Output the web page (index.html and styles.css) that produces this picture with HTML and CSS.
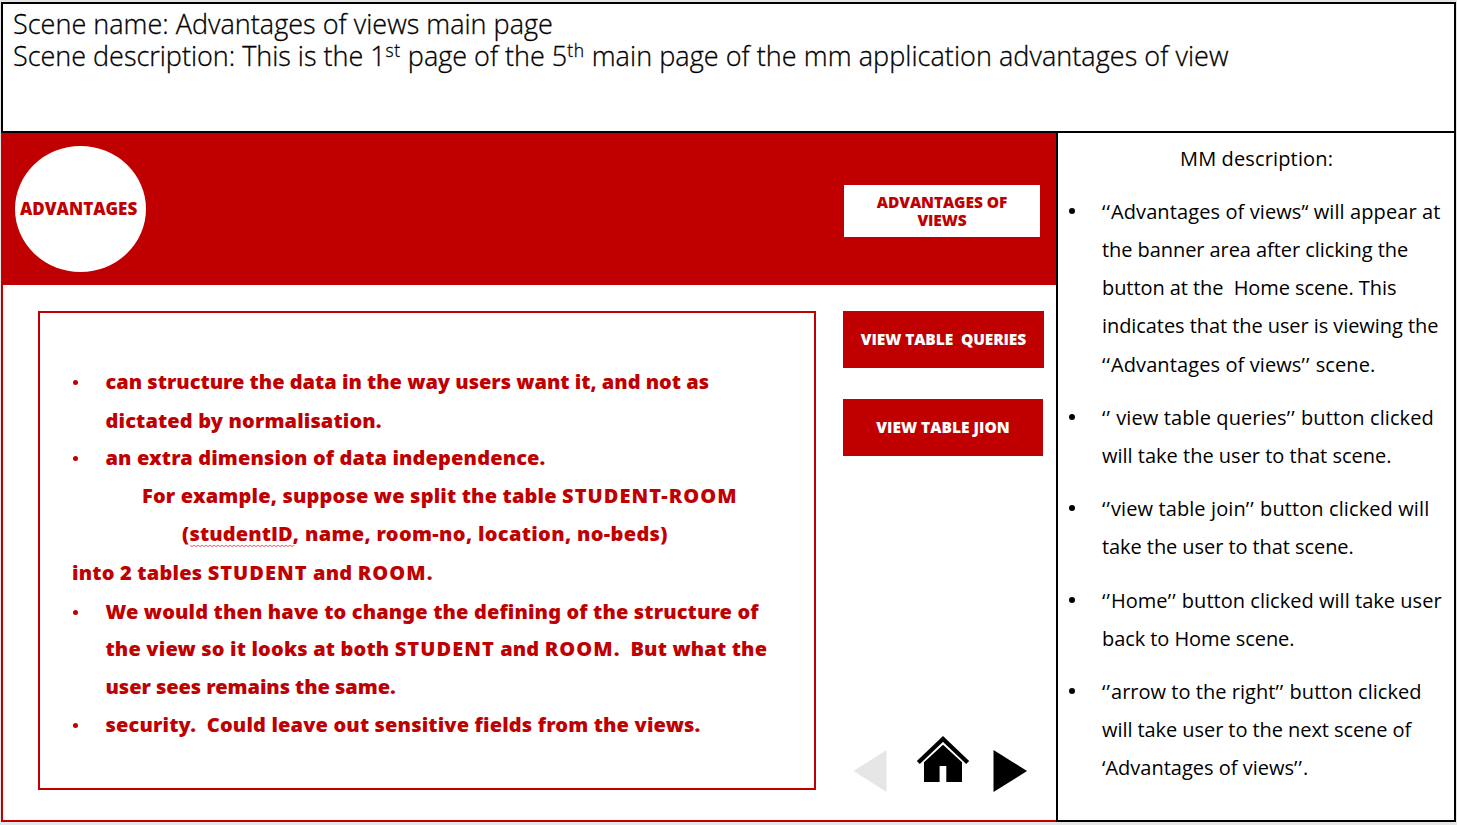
FILE: index.html
```
<!DOCTYPE html>
<html lang="en">
<head>
<meta charset="utf-8">
<title>Advantages of views</title>
<link rel="stylesheet" href="styles.css">
</head>
<body>
<div class="storyboard">
  <header class="scene">
    <p class="scene-name">Scene name: Advantages of views main page</p>
    <p><span class="sd-a">Scene description: This is the 1</span><span class="sup">st</span> page of the 5<span class="sup">th</span><span class="sd-b"> main page of the mm application advantages of view</span></p>
  </header>
  <div class="columns">
    <main class="stage">
      <div class="banner">
        <div class="circle">ADVANTAGES</div>
        <div class="banner-label">ADVANTAGES OF<br>VIEWS</div>
      </div>
      <div class="content">
        <section class="panel">
          <div class="line dot"><span class="l1">can structure the data in the way users want it, and not as</span></div>
          <div class="line ind"><span class="l2">dictated by normalisation.</span></div>
          <div class="line dot"><span class="l2">an extra dimension of data independence.</span></div>
          <div class="line ind-2"><span class="l4">For example, suppose we split the table <span class="caps">STUDENT-ROOM</span></span></div>
          <div class="line ind-3"><span class="l5">(<span class="typo">studentID<svg class="squiggle" width="104" height="4"><defs><pattern id="wave" width="4" height="4" patternUnits="userSpaceOnUse"><path d="M0 .8L2 2.8L4 .8" fill="none" stroke="#f03030" stroke-width=".9"/></pattern></defs><rect width="104" height="4" fill="url(#wave)"/></svg></span>, name, room-no, location, no-beds)</span></div>
          <div class="line"><span class="l6">into 2 tables <span class="caps">STUDENT</span> and <span class="caps">ROOM</span>.</span></div>
          <div class="line dot"><span class="l2">We would then have to change the defining of the structure of</span></div>
          <div class="line ind"><span class="l8">the view so it looks at both <span class="caps">STUDENT</span> and <span class="caps">ROOM</span>.  But what the</span></div>
          <div class="line ind"><span class="l9">user sees remains the same.</span></div>
          <div class="line dot"><span class="l10">security.  Could leave out sensitive fields from the views.</span></div>
        </section>
        <aside class="side">
          <div class="btn">VIEW TABLE  QUERIES</div>
          <div class="btn btn-join">VIEW TABLE JION</div>
          <nav class="nav">
            <svg width="34" height="42"><path d="M.5 21L33.5 0V42Z" fill="#e6e6e6"/></svg>
            <svg class="home" width="54" height="48" viewBox="916 735 54 48"><path d="M918.3 762.5L943 739L967.7 762.5" fill="none" stroke="#000" stroke-width="4.2"/><path d="M924 762.3L943 744.8L962 762.3V782H946.3V766H939.6V782H924Z"/></svg>
            <svg width="34" height="42"><path d="M.5 0L34 21L.5 42Z"/></svg>
          </nav>
        </aside>
      </div>
    </main>
    <section class="notes">
      <h1>MM description:</h1>
      <ul>
        <li class="tall"><span class="wide"><span class="q">‘‘</span>Advantages of views’‘ will appear at</span><br><span class="snug">the banner area after clicking the</span><br><span class="snug">button at the  Home scene. This</span><br><span class="snug">indicates that the user is viewing the</span><br><span class="drop wide"><span class="q">‘‘</span>Advantages of views<span class="q">’’</span> scene.</span></li>
        <li><span class="wide"><span class="q">‘’</span> view table queries<span class="q">’’</span> button clicked</span><br>will take the user to that scene.</li>
        <li><span class="wide"><span class="q">‘’</span>view table join<span class="q">’’</span> button clicked will</span><br><span class="snug">take the user to that scene.</span></li>
        <li class="late"><span class="mid"><span class="q">‘’</span>Home<span class="q">’’</span> button clicked will take user</span><br><span class="snug">back to Home scene.</span></li>
        <li><span class="mid"><span class="q">‘’</span>arrow to the right<span class="q">’’</span> button clicked</span><br><span class="snug">will take user to the next scene of</span><br>‘Advantages of views<span class="q">’’</span>.</li>
      </ul>
    </section>
  </div>
</div>
</body>
</html>
```
FILE: styles.css
```
* { box-sizing: border-box; margin: 0; padding: 0; }
body { width: 1457px; height: 825px; background: #e6e6e6; padding: 2px 1px 3px; overflow: hidden; color: #000; }
.storyboard { width: 1455px; height: 820px; display: flex; flex-direction: column; background: #fff; }
.scene { height: 131px; border: 2px solid #000; padding: 4px 10px 0; font: 300 27px/32px "Open Sans", sans-serif; -webkit-text-stroke: .3px #000; }
.scene p { height: 32px; white-space: pre; }
.scene-name { letter-spacing: .02px; }
.sd-a { letter-spacing: -.02px; }
.sd-b { letter-spacing: .05px; }
.sup { font-size: 17.5px; line-height: 0; letter-spacing: .6px; position: relative; top: -9px; }
.columns { flex: 1; min-height: 0; display: flex; }
.stage { width: 1055px; border: 2px solid #c00000; border-top: 0; border-right: 0; display: flex; flex-direction: column; }
.banner { height: 152px; background: #c00000; display: flex; align-items: flex-start; justify-content: space-between; padding: 13px 16px 0 12px; color: #c00000; font-family: "Open Sans", sans-serif; font-weight: 800; }
.circle { width: 131px; height: 126px; border-radius: 50%; background: #fff; font-size: 17px; line-height: 126px; padding-left: 5px; }
.banner-label { width: 196px; height: 52px; margin-top: 39px; background: #fff; text-align: center; font-size: 15.5px; line-height: 18px; padding-top: 8px; letter-spacing: -.1px; }
.content { flex: 1; display: flex; padding: 26px 0 0 35px; gap: 27px; }
.panel { width: 778px; height: 479px; border: 2px solid #c00000; padding: 50px 0 0 32px; display: grid; grid-template-rows: 38px 39px 37px 38px 38px 39px 39px 37px 38px 38px; align-items: end; color: #c00000; font: 900 20px/38px "Noto Sans", sans-serif; }
.line { height: 38px; display: flex; white-space: pre; }
.dot::before { content: ""; flex: none; width: 5px; height: 5px; border-radius: 50%; background: #c00000; margin: 17px 27.5px 0 1px; }
.ind { padding-left: 33.5px; }
.ind-2 { padding-left: 70px; }
.ind-3 { padding-left: 110px; }
.l1 { letter-spacing: 0; }
.l2 { letter-spacing: .14px; }
.l4 { letter-spacing: .17px; }
.l5 { letter-spacing: .34px; }
.l6 { letter-spacing: .2px; }
.l8 { letter-spacing: .17px; }
.l9 { letter-spacing: -.05px; }
.l10 { letter-spacing: .16px; }
.caps { letter-spacing: 1.05px; }
.typo { position: relative; font-family: "Open Sans", sans-serif; font-weight: 800; letter-spacing: .1px; }
.squiggle { position: absolute; left: 0; top: 24px; }
.side { width: 201px; display: flex; flex-direction: column; }
.btn { height: 57px; background: #c00000; color: #fff; font: 800 15.5px/57px "Open Sans", sans-serif; letter-spacing: -.1px; text-align: center; white-space: pre; }
.btn-join { width: 200px; margin-top: 31px; letter-spacing: 0; }
.nav { display: flex; margin: 279px 0 0 10px; }
.nav svg { display: block; flex: none; margin-top: 15px; }
.nav .home { margin: 0 23px 0 29px; }
.notes { width: 400px; border: solid #000; border-width: 0 2px 2px; padding: 7px 0 0 10px; font: 400 20px/38px "Open Sans", sans-serif; }
.notes h1 { font: inherit; height: 38px; padding-left: 112px; letter-spacing: .14px; }
.notes ul { list-style: none; }
.notes li { margin-top: 15px; padding-left: 34px; position: relative; white-space: pre; }
.notes li::before { content: ""; position: absolute; left: 1px; top: 15px; width: 6px; height: 6px; border-radius: 50%; background: #000; }
.notes .tall { padding-bottom: 1px; }
.notes .late { margin-top: 16px; }
.drop { position: relative; top: 1px; }
.wide { letter-spacing: .1px; }
.mid { letter-spacing: .03px; }
.snug { letter-spacing: -.07px; }
.q { letter-spacing: 1.1px; }
```
